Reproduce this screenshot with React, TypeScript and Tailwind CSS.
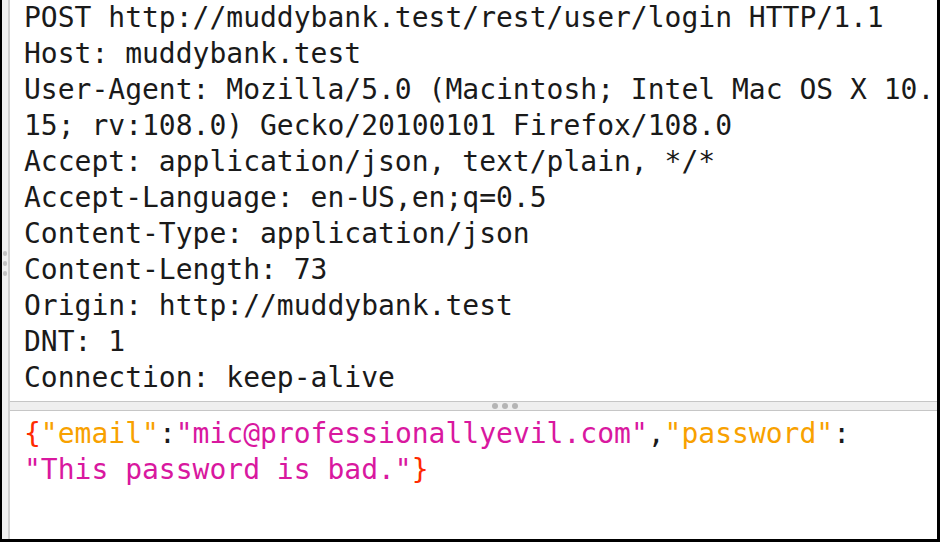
import React from 'react';

const headerLines = [
  'POST http://muddybank.test/rest/user/login HTTP/1.1',
  'Host: muddybank.test',
  'User-Agent: Mozilla/5.0 (Macintosh; Intel Mac OS X 10.',
  '15; rv:108.0) Gecko/20100101 Firefox/108.0',
  'Accept: application/json, text/plain, */*',
  'Accept-Language: en-US,en;q=0.5',
  'Content-Type: application/json',
  'Content-Length: 73',
  'Origin: http://muddybank.test',
  'DNT: 1',
  'Connection: keep-alive',
];

const Dot = () => <span className="block h-[6px] w-[6px] rounded-full bg-[#b5b5b5]" />;

export default function App() {
  return (
    <div
      className="flex h-[542px] w-[940px] overflow-hidden border-b-[3px] border-l-2 border-r-[3px] border-black bg-white text-[28px] leading-[36px] text-[#1a1a1a]"
      style={{ fontFamily: '"DejaVu Sans Mono", "Liberation Mono", monospace' }}
    >
      {/* left gutter with drag handle */}
      <div className="flex w-[6px] shrink-0 flex-col items-center bg-[#f2f2f2] pt-[251px]">
        <div className="flex flex-col gap-[5px]">
          <span className="block h-[5px] w-[4px] rounded-full bg-[#c4c4c4]" />
          <span className="block h-[5px] w-[4px] rounded-full bg-[#c4c4c4]" />
          <span className="block h-[5px] w-[4px] rounded-full bg-[#c4c4c4]" />
        </div>
      </div>

      <div className="flex min-w-0 flex-1 flex-col border-l-2 border-[#d2d2d2]">
        {/* headers */}
        <div className="h-[401px] shrink-0 pl-[14px] whitespace-pre">
          {headerLines.map((line) => (
            <div key={line}>{line}</div>
          ))}
        </div>

        {/* splitter */}
        <div className="flex h-[10px] shrink-0 items-center justify-center gap-[4px] border-y border-[#c6c6c6] bg-[#efefef] pl-[63px]">
          <Dot />
          <Dot />
          <Dot />
        </div>

        {/* body */}
        <div className="flex-1 pt-[5px] pl-[14px] whitespace-pre">
          <div>
            <span className="text-[#ff2a00]">{'{'}</span>
            <span className="text-[#f8a100]">"email"</span>
            <span>:</span>
            <span className="text-[#d9189f]">"mic@professionallyevil.com"</span>
            <span>,</span>
            <span className="text-[#f8a100]">"password"</span>
            <span>:</span>
          </div>
          <div>
            <span className="text-[#d9189f]">"This password is bad."</span>
            <span className="text-[#ff2a00]">{'}'}</span>
          </div>
        </div>
      </div>
    </div>
  );
}
